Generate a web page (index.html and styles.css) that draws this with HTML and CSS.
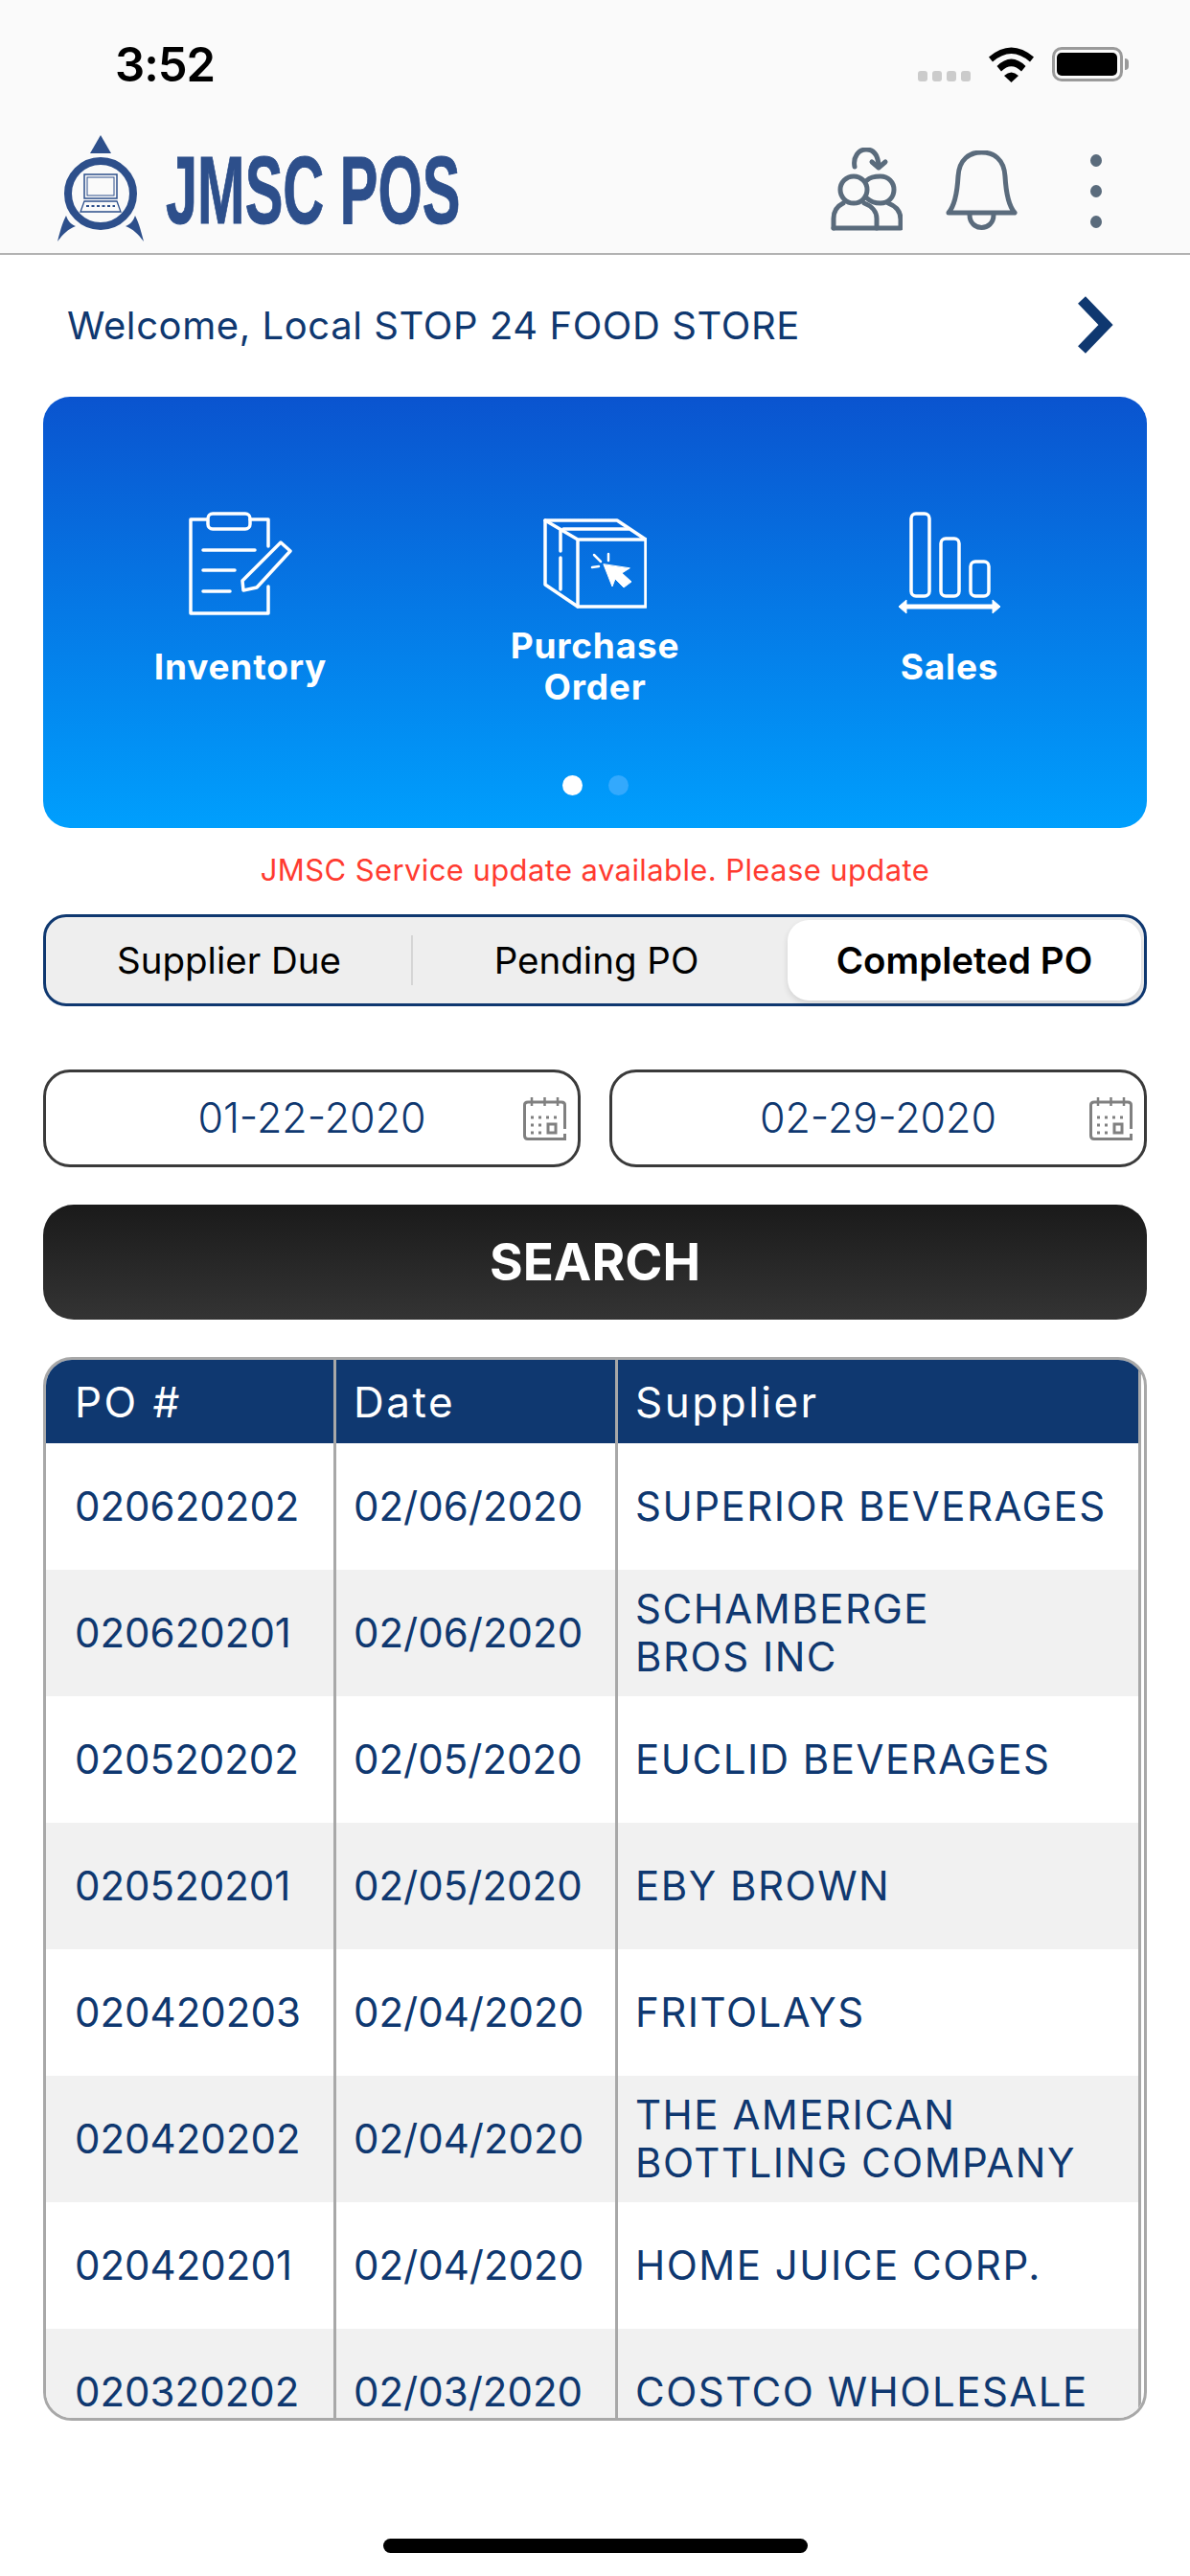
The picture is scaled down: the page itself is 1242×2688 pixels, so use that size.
FILE: index.html
```html
<!DOCTYPE html>
<html lang="en">
<head>
<meta charset="utf-8">
<title>JMSC POS</title>
<link rel="stylesheet" href="styles.css">
</head>
<body>
<div class="page">
  <header class="top">
    <div class="status">
      <span class="time">3:52</span>
      <div class="status-icons">
        <div class="signal"><i></i><i></i><i></i><i></i></div>
        <svg class="wifi" viewBox="0 0 47 37"><path d="M0 10.500Q23.500-9.500 47 10.500L43 15.500Q23.500-1.500 4 15.500Z"/><path d="M8.500 20Q23.500 5 38.500 20L34 25.500Q23.500 15 13 25.500Z"/><path d="M16 30Q23.500 23 31 30L23.500 37Z"/></svg>
        <div class="battery"><div class="battery-fill"></div></div>
      </div>
    </div>
    <nav class="nav">
      <svg class="logo" viewBox="0 0 92 112">
        <path class="logo-fill" d="M46 0L57 19H35Z"/>
        <circle cx="46" cy="61" r="34" fill="none" stroke="#2d4f8b" stroke-width="8"/>
        <path class="logo-fill" d="M1 111C5 95 7 90 10 84C12 90 15 93 20 95C12 98 7 103 1 111Z"/>
        <path class="logo-fill" d="M91 111C87 95 85 90 82 84C80 90 77 93 72 95C80 98 85 103 91 111Z"/>
        <rect x="29" y="41" width="34" height="25" fill="none" stroke="#2d4f8b" stroke-width="1.500"/>
        <rect x="32" y="44" width="28" height="19" fill="none" stroke="#2d4f8b" stroke-width="1"/>
        <path d="M29 69H63L67 80H25Z" fill="none" stroke="#2d4f8b" stroke-width="1.300"/>
        <path d="M31 74H61" stroke="#2d4f8b" stroke-width="2" stroke-dasharray="3 2.500"/>
      </svg>
      <div class="brand"><span class="brand-text">JMSC POS</span></div>
      <div class="nav-icons">
        <svg class="ic-people" viewBox="0 0 75 87" fill="none" stroke="#5a6b7c" stroke-width="5" stroke-linecap="round" stroke-linejoin="round">
          <path d="M38 34C41 31 46 30 52 30C60 30 66 36 66 44C66 52 60 58 52 58C46 58 41 56 38 53"/>
          <circle cx="24" cy="44" r="14"/>
          <path d="M3 84V74C3 67 7 61 13 58M35 58C43 61 48 67 48 74V84"/>
          <path d="M60 58C68 61 73 67 73 75V84H3"/>
          <path d="M25 20C23 10 29 2 37 2C44 2 49 7 50 18"/>
          <path d="M43 15L50 21L57 15"/>
        </svg>
        <svg class="ic-bell" viewBox="0 0 75 83" fill="none" stroke="#5a6b7c" stroke-width="5" stroke-linecap="round" stroke-linejoin="round">
          <path d="M3 65C9 58 12 45 13 27C14 9 25 2 37.500 2C50 2 61 9 62 27C63 45 66 58 72 65Z"/>
          <path d="M25 67C25 85 50 85 50 67"/>
        </svg>
        <div class="kebab"><i></i><i></i><i></i></div>
      </div>
    </nav>
  </header>

  <div class="welcome">
    <span>Welcome, Local STOP 24 FOOD STORE</span>
    <svg class="chev" viewBox="0 0 37 60"><path d="M4 4L29 30L4 56" fill="none" stroke="#0f3870" stroke-width="11"/></svg>
  </div>

  <section class="hero">
    <div class="tiles">
      <div class="tile">
        <svg class="tile-icon" viewBox="0 0 108 108" fill="none" stroke="#fff" stroke-width="3.500" stroke-linecap="round" stroke-linejoin="round">
          <path d="M19 8H2V106H83V78"/><path d="M64 8H83V36"/>
          <rect x="20" y="2" width="44" height="16" rx="5"/>
          <path d="M15 40H69M15 61H48M15 83H43"/>
          <path d="M56 72L96 32L106 41L71 79L57 82Z"/>
        </svg>
        <div class="tile-label">Inventory</div>
      </div>
      <div class="tile">
        <svg class="tile-icon" viewBox="0 0 108 108" fill="none" stroke="#fff" stroke-width="3.500" stroke-linecap="round" stroke-linejoin="round">
          <path d="M2 9H77L107 29V99H36L2 76Z"/><path d="M2 9L36 29H107M36 29V99"/>
          <path d="M21 18H89M18 20V41M18 48V81"/>
          <path d="M63 55L72 78L75 70L84 79L92 73L82 64L90 59Z" fill="#fff" stroke-width="1"/>
          <path d="M68 44V51M53 45L60 52M51 58L58 57" stroke-width="2.500"/>
        </svg>
        <div class="tile-label">Purchase<br>Order</div>
      </div>
      <div class="tile">
        <svg class="tile-icon" viewBox="0 0 108 108" fill="none" stroke="#fff" stroke-width="3.500" stroke-linejoin="round">
          <rect x="14" y="2" width="19" height="86" rx="5"/>
          <rect x="45" y="28" width="19" height="60" rx="5"/>
          <rect x="76" y="52" width="19" height="36" rx="5"/>
          <path d="M4 99H104" stroke-width="5"/>
          <path d="M1 99L9 92V106ZM107 99L99 92V106Z" fill="#fff" stroke-width="1"/>
        </svg>
        <div class="tile-label">Sales</div>
      </div>
    </div>
    <div class="dots"><i class="dot-on"></i><i class="dot-off"></i></div>
  </section>

  <p class="notice">JMSC Service update available. Please update</p>

  <div class="segments">
    <div class="seg seg-first">Supplier Due</div>
    <div class="seg seg-mid">Pending PO</div>
    <div class="seg seg-on">Completed PO</div>
  </div>

  <div class="dates">
    <div class="date-field"><span>01-22-2020</span>
      <svg class="cal" viewBox="0 0 45 45"><use href="#cal"/></svg>
    </div>
    <div class="date-field"><span>02-29-2020</span>
      <svg class="cal" viewBox="0 0 45 45"><use href="#cal"/></svg>
    </div>
  </div>
  <svg class="defs" width="0" height="0"><defs>
    <g id="cal" fill="none" stroke="#808080">
      <path d="M43.500 33V8Q43.500 5 40 5H5Q1.500 5 1.500 8V40Q1.500 43.500 5 43.500H43.500V38" stroke-width="3"/>
      <path d="M9 0V9M22.500 0V9M36 0V9" stroke-width="2.500"/>
      <path d="M8 21H36M8 29H19M8 37H19" stroke-width="3" stroke-dasharray="3 5"/>
      <rect x="26" y="28" width="8" height="9" stroke-width="3"/>
    </g>
  </defs></svg>

  <button class="search">SEARCH</button>

  <div class="table-wrap">
    <table class="po">
      <thead>
        <tr><th class="c1">PO #</th><th class="c2">Date</th><th class="c3">Supplier</th></tr>
      </thead>
      <tbody>
        <tr><td class="c1">020620202</td><td class="c2">02/06/2020</td><td class="c3">SUPERIOR BEVERAGES</td></tr>
        <tr><td class="c1">020620201</td><td class="c2">02/06/2020</td><td class="c3">SCHAMBERGE<br>BROS INC</td></tr>
        <tr><td class="c1">020520202</td><td class="c2">02/05/2020</td><td class="c3">EUCLID BEVERAGES</td></tr>
        <tr><td class="c1">020520201</td><td class="c2">02/05/2020</td><td class="c3">EBY BROWN</td></tr>
        <tr><td class="c1">020420203</td><td class="c2">02/04/2020</td><td class="c3">FRITOLAYS</td></tr>
        <tr><td class="c1">020420202</td><td class="c2">02/04/2020</td><td class="c3">THE AMERICAN<br>BOTTLING COMPANY</td></tr>
        <tr><td class="c1">020420201</td><td class="c2">02/04/2020</td><td class="c3">HOME JUICE CORP.</td></tr>
        <tr><td class="c1">020320202</td><td class="c2">02/03/2020</td><td class="c3">COSTCO WHOLESALE</td></tr>
      </tbody>
    </table>
  </div>

  <div class="home-bar"></div>
</div>
</body>
</html>
```
FILE: styles.css
```css
* { box-sizing: border-box; }
html, body { margin: 0; padding: 0; background: #fff; }
body { font-family: Inter, "Liberation Sans", sans-serif; color: #0f3870; }
.page { width: 1242px; height: 2688px; overflow: hidden; background: #fff; }

.top { height: 266px; background: #fafafa; border-bottom: 2px solid #b2b2b2; }
.status { height: 132px; display: flex; align-items: flex-start; justify-content: space-between; padding: 49px 0 0 120px; }
.time { font-size: 49px; font-weight: 600; line-height: 36px; color: #000; letter-spacing: -1px; padding-top: 1px; }
.status-icons { display: flex; align-items: flex-start; }
.signal { display: flex; gap: 5px; margin: 25px 19px 0 0; }
.signal i { width: 10px; height: 11px; border-radius: 3px; background: #cbcbcb; }
.wifi { width: 47px; height: 37px; }
.battery { width: 74px; height: 36px; margin: 0 70px 0 19px; border: 3px solid #9a9a9a; border-radius: 10px; padding: 3px 3px 3px 2px; position: relative; }
.battery::after { content: ""; position: absolute; right: -9px; top: 9px; width: 4px; height: 12px; background: #9a9a9a; border-radius: 0 6px 6px 0; }
.battery-fill { width: 100%; height: 100%; background: #000; border-radius: 5px; }

.nav { height: 132px; display: flex; align-items: flex-start; padding-left: 59px; }
.logo { width: 92px; height: 112px; margin-top: 9px; flex: none; }
.logo-fill { fill: #2d4f8b; }
.brand { width: 305px; margin: 26px 0 0 22px; height: 80px; flex: none; }
.brand-text { display: inline-block; font-family: "Liberation Sans", Arial, sans-serif; font-weight: 700; font-size: 100px; line-height: 80px; color: #2d4f8b; -webkit-text-stroke: 1px #2d4f8b; white-space: nowrap; transform: scaleX(.595); transform-origin: left center; }
.nav-icons { display: flex; align-items: flex-start; margin-left: 389px; }
.ic-people { width: 75px; height: 87px; margin-top: 22px; }
.ic-bell { width: 75px; height: 83px; margin: 25px 0 0 45px; }
.kebab { display: flex; flex-direction: column; gap: 19px; margin: 29px 0 0 76px; }
.kebab i { width: 12px; height: 13px; border-radius: 50%; background: #5a6b7c; }

.welcome { height: 148px; display: flex; align-items: center; justify-content: space-between; padding: 0 80px 2px 70px; font-size: 40px; font-weight: 400; letter-spacing: .58px; }
.chev { width: 37px; height: 60px; }

.hero { margin: 0 45px; width: 1152px; height: 450px; border-radius: 28px; background: linear-gradient(180deg, #0a54cf 0%, #009ffd 100%); }
.tiles { display: grid; grid-template-columns: repeat(3, 370px); justify-content: center; }
.tile { display: flex; flex-direction: column; align-items: center; padding-top: 120px; }
.tile-icon { width: 108px; height: 108px; display: block; }
.tile-label { height: 106px; display: flex; align-items: center; text-align: center; color: #fff; font-size: 37px; font-weight: 700; line-height: 43px; letter-spacing: .8px; }
.dots { display: flex; justify-content: center; gap: 27px; margin-top: 61px; }
.dots i { width: 21px; height: 21px; border-radius: 50%; }
.dot-on { background: #fff; }
.dot-off { background: #33a9fd; }

.notice { height: 90px; margin: 0; padding-bottom: 4px; display: flex; align-items: center; justify-content: center; font-size: 31px; letter-spacing: .4px; color: #ff3b30; }

.segments { margin: 0 45px; width: 1152px; height: 96px; display: grid; grid-template-columns: 380px 391px 1fr; border: 3px solid #0f3870; border-radius: 24px; background: #eeeeee; padding: 3px; color: #000; font-size: 38.500px; }
.seg { display: flex; align-items: center; justify-content: center; position: relative; }
.seg-first { padding-right: 4px; }
.seg-mid { padding-right: 8px; }
.seg-first::after { content: ""; position: absolute; right: 0; top: 16px; bottom: 16px; width: 2px; background: #d5d5d5; }
.seg-on { background: #fff; border-radius: 22px; font-weight: 600; box-shadow: 0 3px 6px rgba(0,0,0,.12); }

.dates { margin: 66px 45px 0; display: grid; grid-template-columns: 561px 561px; column-gap: 30px; }
.date-field { height: 102px; border: 3px solid #3a3a3a; border-radius: 28px; position: relative; display: flex; align-items: center; justify-content: center; padding-bottom: 3px; font-size: 43px; font-weight: 300; }
.cal { position: absolute; right: 12px; top: 26px; width: 45px; height: 45px; }
.defs { position: absolute; }

.search { display: block; margin: 39px 45px 0; width: 1152px; height: 120px; border: 0; border-radius: 32px; background: linear-gradient(180deg, #1a1a1a 0%, #343434 100%); color: #fff; font-family: inherit; font-size: 53px; font-weight: 700; }

.table-wrap { margin: 39px 45px 0; width: 1152px; height: 1110px; border: 3px solid #a8a8a8; border-radius: 30px; overflow: hidden; background: #fff; }
.po { table-layout: fixed; border-collapse: separate; border-spacing: 0; width: 1143px; font-size: 42px; }
.po .c1 { width: 303px; padding-left: 30px; }
.po .c2 { width: 294px; padding-left: 18px; }
.po .c3 { padding-left: 18px; }
.po th { height: 87px; background: #0f3870; color: #fff; font-size: 44px; letter-spacing: 2.500px; font-weight: 400; text-align: left; border-right: 3px solid #a8a8a8; padding-top: 0; padding-bottom: 0; }
.po td { height: 132px; line-height: 50px; border-right: 3px solid #a8a8a8; padding-top: 0; padding-bottom: 0; white-space: nowrap; }
.po td.c3 { letter-spacing: 1.500px; }
.po tbody tr:nth-child(even) td { background: #f1f1f1; }

.home-bar { width: 443px; height: 15px; margin: 123px auto 0; border-radius: 8px; background: #000; }
```
